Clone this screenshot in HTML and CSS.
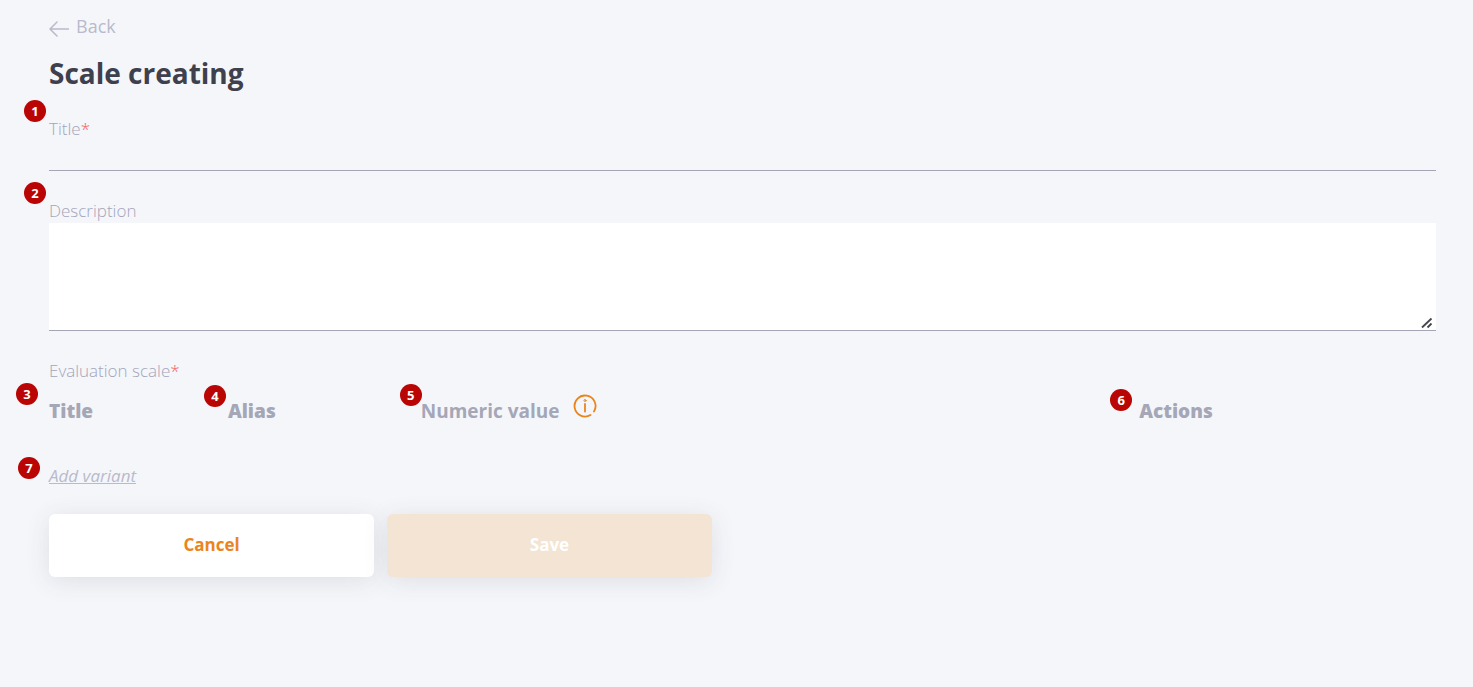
FILE: index.html
```html
<!DOCTYPE html>
<html lang="en">
<head>
  <meta charset="UTF-8">
  <meta name="viewport" content="width=device-width, initial-scale=1.0">
  <title>Scale creating</title>
  <link rel="stylesheet" href="styles.css">
</head>
<body>
  <main class="page">
    <a class="back" href="#">
      <svg class="back-icon" width="20" height="16" viewBox="0 0 20 16" fill="none" stroke="currentColor" stroke-width="1.5" stroke-linecap="round" stroke-linejoin="round">
        <path d="M19.5 8H1M8 1L1 8l7 7"/>
      </svg>
      <span>Back</span>
    </a>
    <h1 class="heading">Scale creating</h1>

    <form class="form">
      <div class="field">
        <span class="badge">1</span>
        <label class="label" for="title">Title<span class="required">*</span></label>
        <input class="input" id="title" type="text">
      </div>

      <div class="field">
        <span class="badge">2</span>
        <label class="label" for="description">Description</label>
        <div class="textarea-wrap">
          <textarea class="textarea" id="description"></textarea>
          <svg class="grip" width="12" height="12" viewBox="0 0 12 12" fill="none" stroke="#45454f" stroke-width="1.8">
            <path d="M1 10.5L10.5 1.5M6.5 10.5L10.5 6.5"/>
          </svg>
        </div>
      </div>

      <div class="label" id="scale-label">Evaluation scale<span class="required">*</span></div>
      <table class="scale" aria-labelledby="scale-label">
        <thead>
          <tr>
            <th class="col-title"><div class="cell"><span class="badge badge-title">3</span>Title</div></th>
            <th class="col-alias"><div class="cell"><span class="badge badge-alias">4</span>Alias</div></th>
            <th class="col-value">
              <div class="cell cell-value">
                <span class="badge badge-value">5</span>Numeric value
                <svg class="info" width="24" height="24" viewBox="0 0 24 24" fill="none" stroke="#ea851c" stroke-width="1.8" stroke-linecap="round">
                  <path d="M17.5 21A10.5 10.5 0 1 1 21 17.5"/>
                  <path d="M12 10V17.5"/>
                  <circle cx="12" cy="6.5" r="1" stroke-width="1"/>
                </svg>
              </div>
            </th>
            <th><div class="cell"><span class="badge badge-actions">6</span>Actions</div></th>
          </tr>
        </thead>
      </table>

      <div class="add-row">
        <span class="badge badge-add">7</span>
        <a class="add" href="#">Add variant</a>
      </div>

      <div class="buttons">
        <button class="button button-cancel" type="button">Cancel</button>
        <button class="button button-save" type="submit" disabled>Save</button>
      </div>
    </form>
  </main>
</body>
</html>
```
FILE: styles.css
```css
* {
  box-sizing: border-box;
}
body {
  margin: 0;
  background-color: #f4f6fa;
  color: #b9bacb;
  font-family: "Open Sans", "Noto Sans", sans-serif;
  font-size: 17px;
  line-height: 24px;
}
.page {
  padding: 14px 37px 40px 49px;
}
.back {
  display: inline-flex;
  align-items: center;
  gap: 7px;
  color: inherit;
  font-size: 18px;
  text-decoration: none;
}
.back-icon {
  margin-top: 5px;
}
.heading {
  margin: 10px 0 24px;
  color: #3f404d;
  font-size: 28px;
  line-height: 40px;
}
.field {
  position: relative;
  margin-bottom: 28px;
}
.label {
  display: block;
  color: #a3a5ba;
  font-weight: 300;
}
.required {
  color: #f06060;
}
.input, .textarea {
  display: block;
  width: 100%;
  border: 0;
  border-bottom: 1px solid #a5a6b5;
  border-radius: 0;
  outline: none;
  font: inherit;
  color: #3f404d;
}
.input {
  height: 30px;
  background: transparent;
}
.textarea-wrap {
  position: relative;
}
.textarea {
  height: 108px;
  background-color: #fff;
  resize: none;
}
.grip {
  position: absolute;
  right: 3px;
  bottom: 2px;
  pointer-events: none;
}

/* Numbered markers */
.badge {
  position: absolute;
  top: -17px;
  left: -25px;
  width: 22px;
  height: 22px;
  border-radius: 50%;
  background-color: #b90504;
  color: #fff;
  font-family: "Noto Sans", sans-serif;
  font-size: 13px;
  font-weight: bold;
  line-height: 22px;
  text-align: center;
}
.badge-title {
  top: -16px;
  left: -33px;
}
.badge-alias {
  top: -14px;
  left: -24px;
}
.badge-value {
  top: -15px;
  left: -21px;
}
.badge-actions {
  top: -10px;
  left: -29px;
}
.badge-add {
  top: -7px;
  left: -31px;
}

.scale {
  width: 100%;
  margin-top: 16px;
  border-collapse: collapse;
  table-layout: fixed;
}
.scale th {
  padding: 0;
  color: #a5a7b7;
  font-size: 19px;
  font-weight: 800;
  text-align: left;
}
.col-title {
  width: 12.9%;
}
.col-alias {
  width: 13.9%;
}
.col-value {
  width: 51.8%;
}
.cell {
  position: relative;
}
.scale .cell-value {
  display: flex;
  gap: 14px;
  font-weight: 700;
}
.info {
  margin-top: -5px;
}
.add-row {
  position: relative;
  margin-top: 41px;
}
.add {
  color: inherit;
  font-style: italic;
}
.buttons {
  display: flex;
  gap: 13px;
  margin-top: 26px;
}
.button {
  width: 325px;
  height: 63px;
  border: 0;
  border-radius: 6px;
  box-shadow: 0 4px 24px rgba(63, 64, 77, 0.12);
  font: inherit;
  font-weight: bold;
  cursor: pointer;
}
.button-cancel {
  background-color: #fff;
  color: #ea851c;
}
.button-save {
  background-color: #f3e4d4;
  color: #fff;
  cursor: default;
}
```
